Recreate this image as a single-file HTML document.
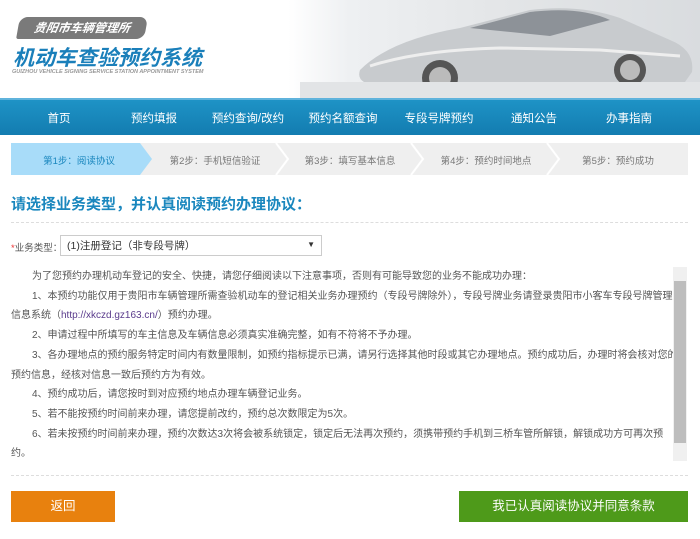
<!DOCTYPE html>
<html><head><meta charset="utf-8"><style>
*{margin:0;padding:0;box-sizing:border-box}
body{width:700px;height:539px;background:#fff;font-family:"Liberation Sans","Microsoft YaHei","Noto Sans CJK SC",sans-serif;position:relative;overflow:hidden;color:#555}
.abs{position:absolute}
.hdr{left:0;top:0;width:700px;height:98px;background:#fff}
.carbg{left:288px;top:0;width:412px;height:98px;background:linear-gradient(90deg,#fff 0%,#eef0f2 15%,#e4e6e8 50%,#d9dcdf 100%)}
.badge{left:18px;top:17px;width:128px;height:22px;background:#7a7a7a;border-radius:8px 8px 8px 2px;transform:skewX(-10deg);color:#fff;font-size:12px;font-weight:bold;font-style:italic;text-align:center;line-height:22px}
.ttl{left:13px;top:42px;font-size:21px;font-weight:bold;font-style:italic;color:#1a7fba}
.sub{left:12px;top:69px;font-size:5.5px;color:#999;font-weight:bold;font-style:italic;white-space:nowrap}
.nav{left:0;top:98px;width:700px;height:37px;background:linear-gradient(#1e93c6,#137cb0);border-top:2px solid #5fb3dc}
.nav span{position:absolute;top:10px;font-size:11.5px;color:#fff;transform:translateX(-50%);white-space:nowrap}
.steps{left:11px;top:143px;width:677px;height:32px;background:#efefef}
.steps span{position:absolute;top:10px;font-size:9.5px;color:#777;transform:translateX(-50%);white-space:nowrap}
.h2{left:11px;top:193px;font-size:15px;font-weight:bold;color:#1a87be}
.dot{left:11px;width:677px;border-top:1px dashed #ddd}
.lab{left:11px;top:240px;font-size:9.5px;color:#555}
.sel{left:60px;top:235px;width:262px;height:21px;border:1px solid #ccc;font-size:10.5px;color:#333;padding:4px 6px;line-height:12px}
.txt{left:11px;top:267px;width:662px;font-size:10px;line-height:19.7px;color:#555;white-space:nowrap}
.txt p{text-indent:21px}
.sb{left:673px;top:267px;width:14px;height:194px;background:#f0f0f0}
.btn{top:491px;height:31px;color:#fff;font-size:12.5px;text-align:center;line-height:31px}
</style></head><body>
<div class="abs hdr"></div>
<div class="abs carbg"></div>
<svg class="abs" style="left:300px;top:0" width="400" height="98">
<path d="M60 70 Q90 40 160 28 L230 10 Q280 4 320 18 L370 40 Q395 50 392 72 L385 82 L80 86 Q55 84 60 70Z" fill="#c8cbce"/>
<path d="M170 28 L230 12 Q280 6 310 20 L250 36Z" fill="#8d9298"/>
<path d="M70 66 Q120 50 200 48 L300 50 L380 56" stroke="#eee" stroke-width="3" fill="none"/>
<circle cx="140" cy="78" r="18" fill="#555"/><circle cx="140" cy="78" r="11" fill="#bbb"/>
<circle cx="330" cy="70" r="16" fill="#555"/><circle cx="330" cy="70" r="10" fill="#bbb"/>
<rect x="0" y="82" width="400" height="16" fill="#e2e4e6"/>
</svg>
<div class="abs badge">贵阳市车辆管理所</div>
<div class="abs ttl">机动车查验预约系统</div>
<div class="abs sub">GUIZHOU VEHICLE SIGNING SERVICE STATION APPOINTMENT SYSTEM</div>
<div class="abs nav">
<span style="left:59px">首页</span><span style="left:154px">预约填报</span><span style="left:248px">预约查询/改约</span><span style="left:343px">预约名额查询</span><span style="left:439px">专段号牌预约</span><span style="left:534px">通知公告</span><span style="left:629px">办事指南</span>
</div>
<div class="abs steps">
<svg class="abs" style="left:0;top:0" width="677" height="32">
<path d="M0 0 H129 L141 16 L129 32 H0Z" fill="#a8dcf9"/>
<path d="M265 0 L277 16 L265 32" stroke="#fff" stroke-width="2" fill="none"/>
<path d="M400 0 L412 16 L400 32" stroke="#fff" stroke-width="2" fill="none"/>
<path d="M536 0 L548 16 L536 32" stroke="#fff" stroke-width="2" fill="none"/>
</svg>
<span style="left:68px;color:#1a87be">第1步：阅读协议</span><span style="left:204px">第2步：手机短信验证</span><span style="left:339px">第3步：填写基本信息</span><span style="left:475px">第4步：预约时间地点</span><span style="left:607px">第5步：预约成功</span>
</div>
<div class="abs h2">请选择业务类型，并认真阅读预约办理协议：</div>
<div class="abs dot" style="top:222px"></div>
<div class="abs lab"><span style="color:#e33">*</span>业务类型：</div>
<div class="abs sel">(1)注册登记（非专段号牌）<span style="position:absolute;right:6px;top:3px;font-size:8px">▼</span></div>
<div class="abs txt">
<p>为了您预约办理机动车登记的安全、快捷，请您仔细阅读以下注意事项，否则有可能导致您的业务不能成功办理：</p>
<p>1、本预约功能仅用于贵阳市车辆管理所需查验机动车的登记相关业务办理预约（专段号牌除外），专段号牌业务请登录贵阳市小客车专段号牌管理</p>
<div>信息系统（<span style="color:#5a3b8c">http://xkczd.gz163.cn/</span>）预约办理。</div>
<p>2、申请过程中所填写的车主信息及车辆信息必须真实准确完整，如有不符将不予办理。</p>
<p>3、各办理地点的预约服务特定时间内有数量限制，如预约指标提示已满，请另行选择其他时段或其它办理地点。预约成功后，办理时将会核对您的</p>
<div>预约信息，经核对信息一致后预约方为有效。</div>
<p>4、预约成功后，请您按时到对应预约地点办理车辆登记业务。</p>
<p>5、若不能按预约时间前来办理，请您提前改约，预约总次数限定为5次。</p>
<p>6、若未按预约时间前来办理，预约次数达3次将会被系统锁定，锁定后无法再次预约，须携带预约手机到三桥车管所解锁，解锁成功方可再次预</p>
<div>约。</div>
</div>
<div class="abs sb"><div style="position:absolute;left:1px;top:14px;width:12px;height:162px;background:#bdbdbd"></div></div>
<div class="abs dot" style="top:475px"></div>
<div class="abs btn" style="left:11px;width:104px;background:#e8810e">返回</div>
<div class="abs btn" style="left:459px;width:229px;background:#4e9a1a">我已认真阅读协议并同意条款</div>
</body></html>
